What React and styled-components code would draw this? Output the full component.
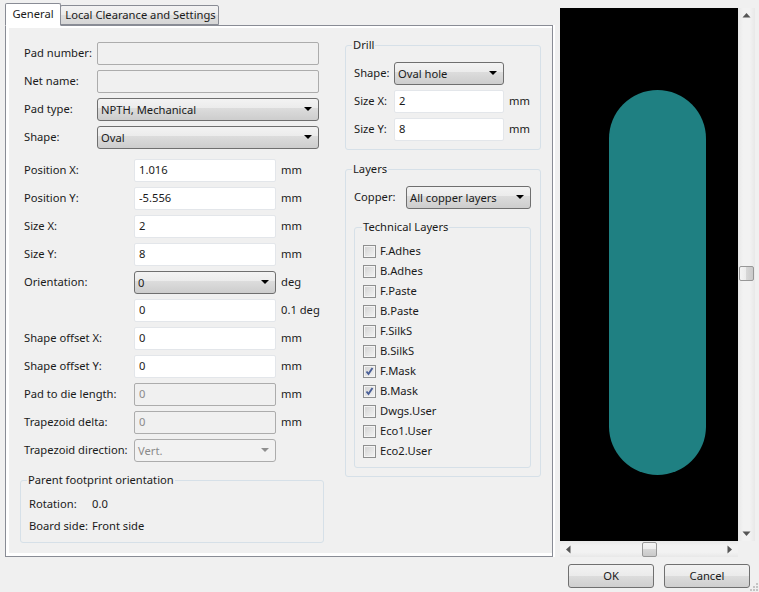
import styled, { createGlobalStyle } from "styled-components";

const GlobalStyle = createGlobalStyle`
  html, body { margin: 0; padding: 0; height: 100%; overflow: hidden; background: #f0f0f0; }
  body { font-family: "Noto Sans", "Open Sans", sans-serif; font-size: 11.2px; color: #1a1a1a; }
`;

const Dialog = styled.div`
  position: relative;
  display: flex;
  gap: 7px;
  width: 759px;
  height: 592px;
  padding: 3px 4px 0 5px;
  box-sizing: border-box;
`;

const Notebook = styled.div`
  display: flex;
  flex-direction: column;
  width: 548px;
`;

const TabBar = styled.div`
  display: flex;
  align-items: flex-end;
  height: 22px;
`;

const Tab = styled.div`
  display: flex;
  align-items: center;
  justify-content: center;
  box-sizing: border-box;
  border: 1px solid #898c95;
  border-radius: 2px 2px 0 0;
  width: ${(p) => p.$width}px;
  height: ${(p) => (p.$active ? "23px" : "20px")};
  padding-bottom: ${(p) => (p.$active ? "3px" : "1px")};
  padding-left: ${(p) => (p.$active ? "0" : "2px")};
  margin-bottom: ${(p) => (p.$active ? "-1px" : "0")};
  margin-left: ${(p) => (p.$active ? "0" : "-1px")};
  background: ${(p) => (p.$active ? "#fff" : "linear-gradient(#f3f3f3, #ebebeb 50%, #dedede 50%, #d6d6d6)")};
  border-bottom-color: ${(p) => (p.$active ? "#fff" : "#898c95")};
  z-index: ${(p) => (p.$active ? 1 : 0)};
`;

const Panel = styled.div`
  display: flex;
  gap: 21px;
  height: 532px;
  box-sizing: border-box;
  border: 1px solid #898c95;
  padding: 0 0 0 14px;
  background: #f0f0f0;
  box-shadow: inset 3px 2px 0 #fff, inset 0 -3px 0 #fff, 2px 0 0 #fff;
`;

const LeftColumn = styled.div`
  display: flex;
  flex-direction: column;
  width: 304px;
  padding-top: 16px;
`;

const RightColumn = styled.div`
  display: flex;
  flex-direction: column;
  gap: 11px;
  width: 196px;
  padding-top: 11px;
`;

const Rows = styled.div`
  display: flex;
  flex-direction: column;
  gap: 5px;
  padding-left: ${(p) => p.$inset || 0}px;
  margin-bottom: ${(p) => p.$after || 0}px;
`;

const Row = styled.div`
  display: flex;
  align-items: center;
  height: 23px;
`;

const Label = styled.span`
  flex: none;
  width: ${(p) => p.$width}px;
  margin-top: -2px;
  white-space: nowrap;
`;

const Unit = styled.span`
  margin: -2px 0 0 5px;
  white-space: nowrap;
`;

const Field = styled.input`
  box-sizing: border-box;
  width: ${(p) => p.$width}px;
  height: 23px;
  padding: 0 4px 2px;
  margin: 0;
  border-radius: 2px;
  border: 1px solid ${(p) => (p.disabled ? "#acacac" : "#e3e6ea")};
  background: ${(p) => (p.disabled ? "#f0f0f0" : "#fff")};
  color: ${(p) => (p.disabled ? "#8a8a8a" : "#1a1a1a")};
  font: inherit;
  outline: none;
`;

const SelectBox = styled.div`
  display: flex;
  align-items: center;
  justify-content: space-between;
  box-sizing: border-box;
  width: ${(p) => p.$width}px;
  height: 23px;
  padding: 0 6px 1px 3px;
  border-radius: 3px;
  border: 1px solid ${(p) => (p.$disabled ? "#acacac" : "#6f6f6f")};
  color: ${(p) => (p.$disabled ? "#8a8a8a" : "#1a1a1a")};
  background: ${(p) =>
    p.$disabled ? "#f2f2f2" : "linear-gradient(#f3f3f3, #ebebeb 45%, #dcdcdc 45%, #cdcdcd)"};
`;

const Caret = styled.span`
  width: 0;
  height: 0;
  border-left: 4px solid transparent;
  border-right: 4px solid transparent;
  border-top: 4px solid ${(p) => (p.$disabled ? "#8f8f8f" : "#000")};
`;

const Select = ({ width, disabled, children }) => (
  <SelectBox $width={width} $disabled={disabled}>
    {children}
    <Caret $disabled={disabled} />
  </SelectBox>
);

const Group = styled.fieldset`
  margin: ${(p) => p.$top || 0}px 0 0;
  padding: ${(p) => p.$pad || "9px 9px 8px 8px"};
  border: 1px solid #d6e0e8;
  border-radius: 3px;
  min-width: 0;
`;

const Legend = styled.legend`
  padding: 0 1px;
  margin-left: ${(p) => p.$offset ?? -2}px;
  line-height: 16px;
`;

const InfoRow = styled.div`
  display: flex;
  height: 16px;
  line-height: 15px;
  margin-bottom: ${(p) => p.$after || 0}px;
`;

const InfoLabel = styled.span`
  width: 63px;
`;

const CheckRow = styled.div`
  display: flex;
  align-items: center;
  gap: 4px;
  height: 20px;
`;

const CheckText = styled.span`
  margin-top: -2px;
`;

const CheckBox = styled.span`
  display: flex;
  align-items: center;
  justify-content: center;
  box-sizing: border-box;
  width: 13px;
  height: 13px;
  border: 1px solid #8e8f8f;
  background: linear-gradient(135deg, #d2d2d2, #f4f4f4);
  box-shadow: inset 0 0 0 1px #f4f4f4;
`;

const Preview = styled.div`
  display: grid;
  grid-template-columns: 178px 17px;
  grid-template-rows: 533px 16px;
  margin-top: 5px;
`;

const Canvas = styled.svg`
  display: block;
  background: #000;
`;

const ScrollBar = styled.div`
  display: flex;
  flex-direction: ${(p) => (p.$vertical ? "column" : "row")};
  align-items: center;
  justify-content: space-between;
  padding: ${(p) => (p.$vertical ? "3px 0" : "0 4px")};
  background: ${(p) =>
    p.$vertical ? "linear-gradient(90deg, #e8e8e8, #f2f2f2 30%, #f2f2f2 70%, #e8e8e8)" : "linear-gradient(#e8e8e8, #f2f2f2 30%, #f2f2f2 70%, #e8e8e8)"};
`;

const Thumb = styled.div`
  box-sizing: border-box;
  width: 15px;
  height: 15px;
  margin-top: ${(p) => (p.$vertical ? "-2px" : "0")};
  border: 1px solid #979797;
  border-radius: 2px;
  background: ${(p) =>
    p.$vertical ? "linear-gradient(90deg, #f4f4f4, #ececec 45%, #d8d8d8 45%, #c9c9c9)" : "linear-gradient(#f4f4f4, #ececec 45%, #d8d8d8 45%, #c9c9c9)"};
`;

const Arrow = ({ points }) => (
  <svg width="9" height="9" viewBox="0 0 9 9">
    <polygon points={points} fill="#555" />
  </svg>
);

const Side = styled.div`
  display: flex;
  flex-direction: column;
`;

const Buttons = styled.div`
  display: flex;
  gap: 10px;
  margin: 7px 0 0 8px;
`;

const Button = styled.button`
  box-sizing: border-box;
  width: 86px;
  height: 24px;
  padding: 0 0 2px;
  border: 1px solid #707070;
  border-radius: 3px;
  background: linear-gradient(#f2f2f2, #ebebeb 48%, #dddddd 48%, #cfcfcf);
  color: #1a1a1a;
  font: inherit;
`;

const Grip = styled.svg`
  position: absolute;
  right: 0;
  bottom: 0;
`;

const techLayers = [
  ["F.Adhes", false],
  ["B.Adhes", false],
  ["F.Paste", false],
  ["B.Paste", false],
  ["F.SilkS", false],
  ["B.SilkS", false],
  ["F.Mask", true],
  ["B.Mask", true],
  ["Dwgs.User", false],
  ["Eco1.User", false],
  ["Eco2.User", false],
];

const App = () => {
  return (
    <>
      <GlobalStyle />
      <Dialog>
        <Notebook>
          <TabBar>
            <Tab $active $width={56}>General</Tab>
            <Tab $width={159}>Local Clearance and Settings</Tab>
          </TabBar>
          <Panel>
            <LeftColumn>
              <Rows $inset={4} $after={10}>
                <Row><Label $width={73}>Pad number:</Label><Field $width={222} disabled /></Row>
                <Row><Label $width={73}>Net name:</Label><Field $width={222} disabled /></Row>
                <Row><Label $width={73}>Pad type:</Label><Select width={222}>NPTH, Mechanical</Select></Row>
                <Row><Label $width={73}>Shape:</Label><Select width={222}>Oval</Select></Row>
              </Rows>
              <Rows $inset={4}>
                <Row><Label $width={110}>Position X:</Label><Field $width={142} defaultValue="1.016" /><Unit>mm</Unit></Row>
                <Row><Label $width={110}>Position Y:</Label><Field $width={142} defaultValue="-5.556" /><Unit>mm</Unit></Row>
                <Row><Label $width={110}>Size X:</Label><Field $width={142} defaultValue="2" /><Unit>mm</Unit></Row>
                <Row><Label $width={110}>Size Y:</Label><Field $width={142} defaultValue="8" /><Unit>mm</Unit></Row>
                <Row><Label $width={110}>Orientation:</Label><Select width={142}>0</Select><Unit>deg</Unit></Row>
                <Row><Label $width={110} /><Field $width={142} defaultValue="0" /><Unit>0.1 deg</Unit></Row>
                <Row><Label $width={110}>Shape offset X:</Label><Field $width={142} defaultValue="0" /><Unit>mm</Unit></Row>
                <Row><Label $width={110}>Shape offset Y:</Label><Field $width={142} defaultValue="0" /><Unit>mm</Unit></Row>
                <Row><Label $width={110}>Pad to die length:</Label><Field $width={142} defaultValue="0" disabled /><Unit>mm</Unit></Row>
                <Row><Label $width={110}>Trapezoid delta:</Label><Field $width={142} defaultValue="0" disabled /><Unit>mm</Unit></Row>
                <Row><Label $width={110}>Trapezoid direction:</Label><Select width={142} disabled>Vert.</Select></Row>
              </Rows>
              <Group $top={10} $pad="8px 8px 8px 8px">
                <Legend>Parent footprint orientation</Legend>
                <InfoRow $after={6}><InfoLabel>Rotation:</InfoLabel>0.0</InfoRow>
                <InfoRow><InfoLabel>Board side:</InfoLabel>Front side</InfoRow>
              </Group>
            </LeftColumn>
            <RightColumn>
              <Group>
                <Legend>Drill</Legend>
                <Rows>
                  <Row><Label $width={40}>Shape:</Label><Select width={110}>Oval hole</Select></Row>
                  <Row><Label $width={40}>Size X:</Label><Field $width={110} defaultValue="2" /><Unit>mm</Unit></Row>
                  <Row><Label $width={40}>Size Y:</Label><Field $width={110} defaultValue="8" /><Unit>mm</Unit></Row>
                </Rows>
              </Group>
              <Group>
                <Legend>Layers</Legend>
                <Row><Label $width={52}>Copper:</Label><Select width={125}>All copper layers</Select></Row>
                <Group $top={10} $pad="6px 8px 6px 8px">
                  <Legend $offset={-1}>Technical Layers</Legend>
                  {techLayers.map(([name, checked]) => (
                    <CheckRow key={name}>
                      <CheckBox>
                        {checked && (
                          <svg width="9" height="9" viewBox="0 0 9 9">
                            <path d="M1.5 4.5 L3.5 7 L7.5 1" fill="none" stroke="#4a5f97" strokeWidth="1.9" />
                          </svg>
                        )}
                      </CheckBox>
                      <CheckText>{name}</CheckText>
                    </CheckRow>
                  ))}
                </Group>
              </Group>
            </RightColumn>
          </Panel>
        </Notebook>
        <Side>
          <Preview>
            <Canvas width="178" height="533" viewBox="0 0 178 533">
              <rect x="49" y="82" width="97" height="385" rx="48.5" fill="#1f8082" />
            </Canvas>
            <ScrollBar $vertical>
              <Arrow points="4.5,2 8.5,6.5 0.5,6.5" />
              <Thumb $vertical />
              <Arrow points="0.5,2.5 8.5,2.5 4.5,7" />
            </ScrollBar>
            <ScrollBar>
              <Arrow points="6.5,0.5 6.5,8.5 2,4.5" />
              <Thumb />
              <Arrow points="2.5,0.5 7,4.5 2.5,8.5" />
            </ScrollBar>
          </Preview>
          <Buttons>
            <Button>OK</Button>
            <Button>Cancel</Button>
          </Buttons>
        </Side>
        <Grip width="10" height="10" viewBox="0 0 10 10">
          <g fill="#c4c4c4">
            <rect x="7" y="1" width="2" height="2" />
            <rect x="4" y="4" width="2" height="2" />
            <rect x="7" y="4" width="2" height="2" />
            <rect x="1" y="7" width="2" height="2" />
            <rect x="4" y="7" width="2" height="2" />
            <rect x="7" y="7" width="2" height="2" />
          </g>
        </Grip>
      </Dialog>
    </>
  );
};

export default App;
